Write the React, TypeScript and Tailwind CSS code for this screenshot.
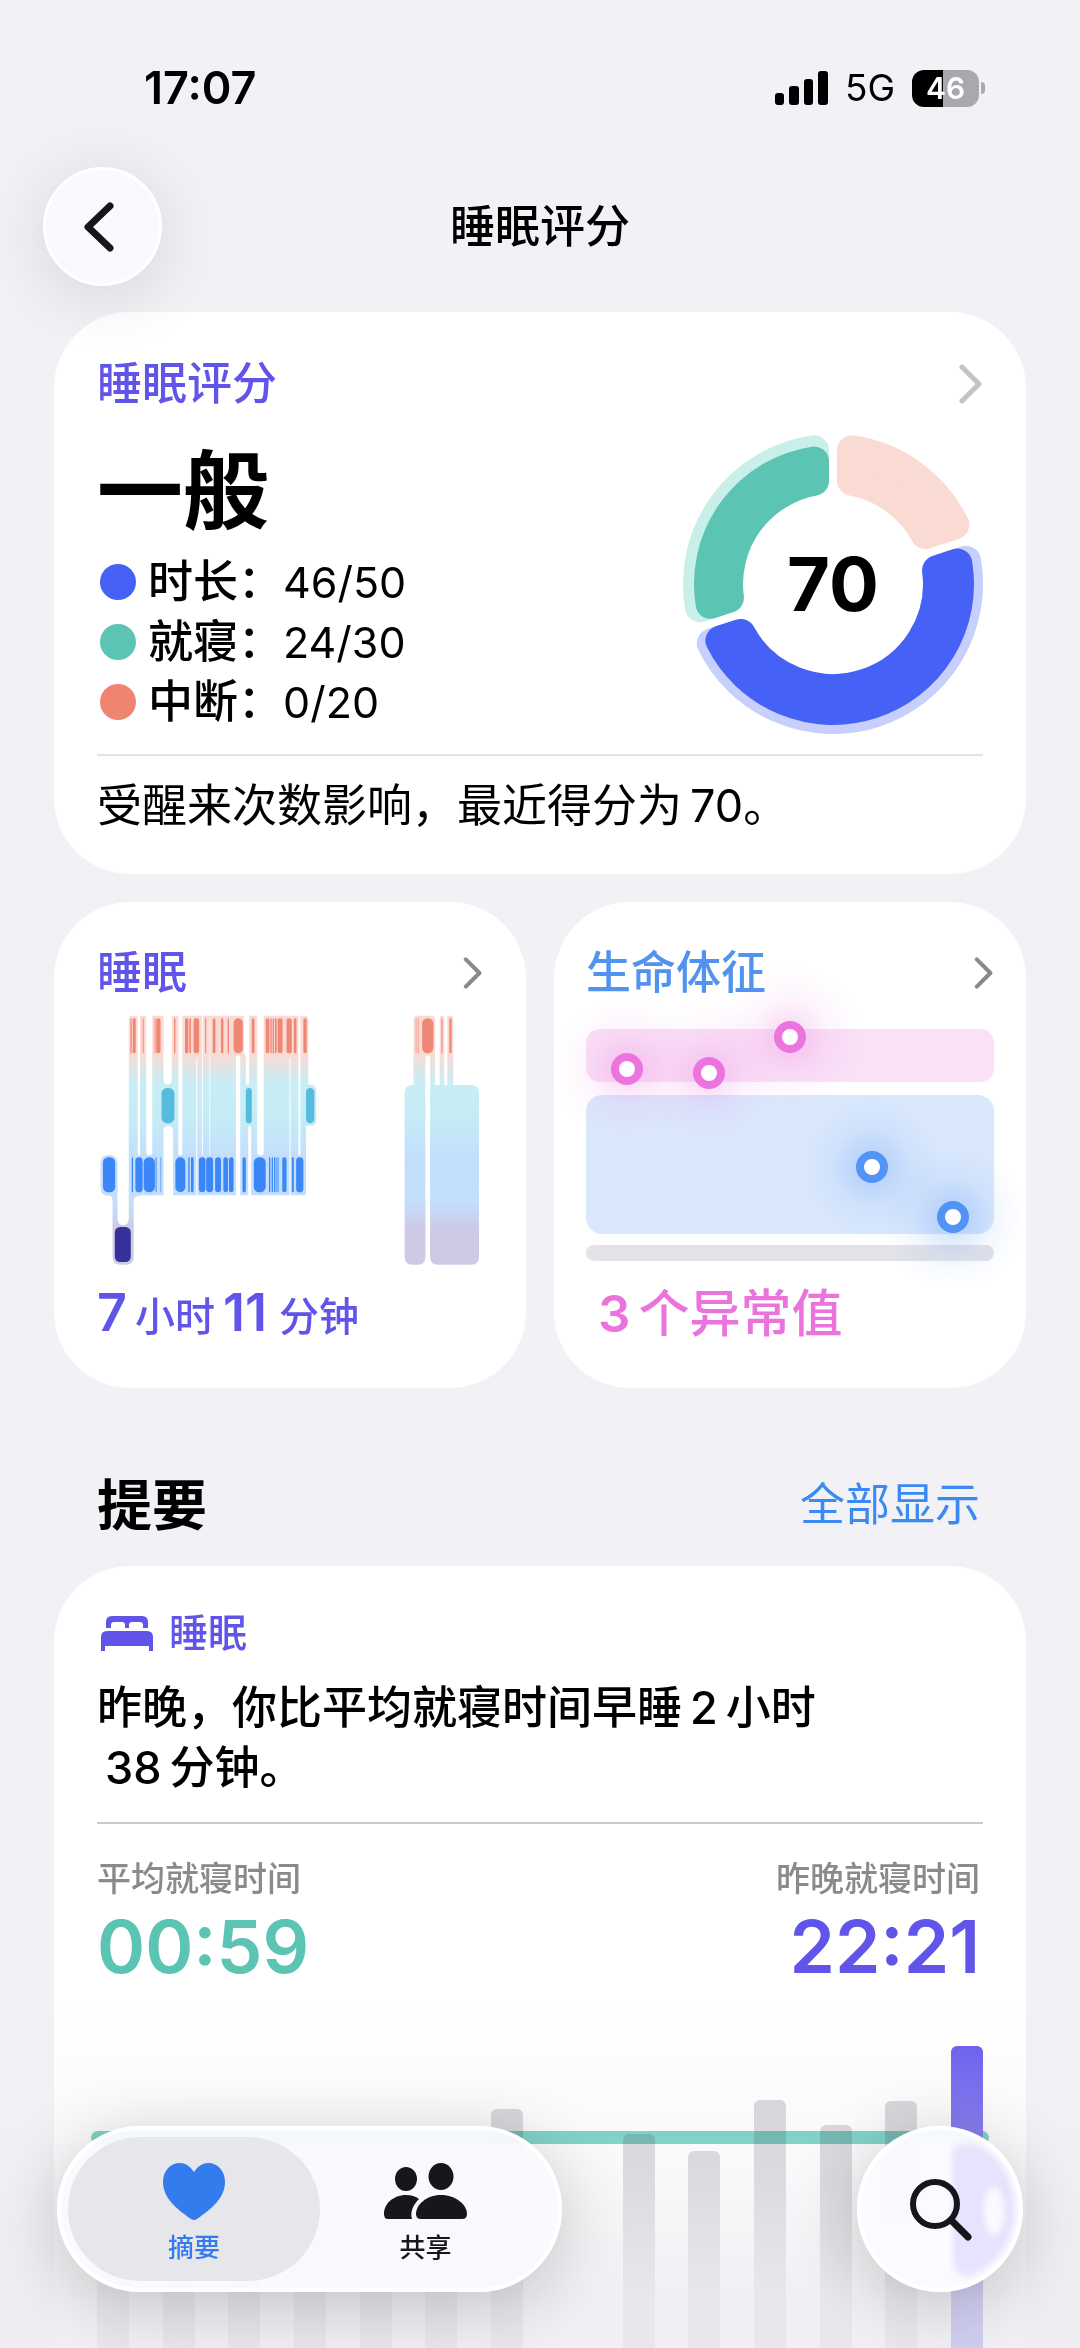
import type { ReactNode } from 'react';
import { clsx } from 'clsx';

const legend = [
  { label: '时长', value: '46/50', dot: 'bg-[#4661f6]' },
  { label: '就寝', value: '24/30', dot: 'bg-[#5bc4b3]' },
  { label: '中断', value: '0/20', dot: 'bg-[#ef8570]' },
];

// [start, end] of every sleep stage on the time axis
const awake = [
  [209, 213], [216, 225], [246, 249], [282, 285], [287, 300], [341, 345], [374, 384], [387, 392],
  [400, 417], [435, 438], [458, 466], [483, 490], [503, 507], [521, 549], [576, 584], [618, 629],
  [632, 636], [639, 643], [646, 651], [654, 669], [681, 697], [703, 711], [732, 742],
];
const rem = [[303, 342], [558, 576], [740, 765]];
const core = [
  [126, 163], [213, 217], [224, 246], [249, 283], [285, 288], [300, 302], [345, 375], [384, 388],
  [392, 400], [416, 436], [438, 459], [465, 483], [490, 504], [507, 521], [548, 558], [582, 618],
  [628, 632], [636, 640], [643, 646], [648, 651], [654, 657], [668, 681], [697, 703], [710, 732],
];
const deep = [[162, 210]];
const nap = [[1091, 1125], [1173, 1180]];
const napFaint = [[1071, 1075], [1078, 1082], [1148, 1154]];

// empty space between stages: [x1, x2, y1, y2]
const stageGaps = [
  [231, 238, 330, 765], [257, 275, 330, 765], [309, 334, 330, 550], [309, 338, 675, 900],
  [354, 366, 330, 765], [408, 411, 470, 900], [425, 428, 330, 765], [448, 450, 355, 765],
  [528, 541, 462, 900], [552, 568, 330, 462], [558, 568, 440, 552], [565, 574, 675, 900],
  [592, 612, 330, 765], [690, 693, 470, 900], [717, 723, 330, 765],
];

const vitals = [
  { x: 41, y: 55, high: true },
  { x: 123, y: 59, high: true },
  { x: 204, y: 23, high: true },
  { x: 286, y: 153, high: false },
  { x: 367, y: 203, high: false },
];

// distance from the top of the chart, null for a day with no data
const bedtimes = [110, 112, 108, 110, 112, 110, 63, null, 88, 105, 54, 79, 55, 0];

// Ring segment whose ends stay parallel to the gap, corners are rounded by the stroke
const segmentPath = (from: number, to: number, outer: number) => {
  const corner = 15;
  const inset = 4 + corner;
  const r1 = 90 + corner;
  const r2 = outer - corner;
  const point = (r: number, deg: number, sign: number) => {
    const a = (deg * Math.PI) / 180 + sign * Math.asin(inset / r);
    return `${150 + r * Math.sin(a)} ${150 - r * Math.cos(a)}`;
  };
  return `M${point(r2, from, 1)} A${r2} ${r2} 0 0 1 ${point(r2, to, -1)} L${point(r1, to, -1)} A${r1} ${r1} 0 0 0 ${point(r1, from, 1)} Z`;
};

const Segment = ({ from, to, outer, color }: { from: number; to: number; outer: number; color: string }) => (
  <path d={segmentPath(from, to, outer)} fill={color} stroke={color} strokeWidth={30} strokeLinejoin="round" />
);

const ScoreRing = () => (
  <div className="relative flex size-[300px] items-center justify-center">
    <svg viewBox="0 0 300 300" className="absolute inset-0 size-full">
      <Segment from={0} to={72} outer={150} color="#f9dbd3" />
      <Segment from={72} to={252} outer={150} color="#c7cffc" />
      <Segment from={72} to={252} outer={141} color="#4661f6" />
      <Segment from={252} to={360} outer={150} color="#c8f0e9" />
      <Segment from={252} to={360} outer={139} color="#5bc4b3" />
    </svg>
    <span className="relative text-[74px] leading-none font-bold">70</span>
  </div>
);

const Chevron = ({ className }: { className: string }) => (
  <svg viewBox="0 0 24 40" fill="none" className={className}>
    <path d="M3 3 20 20 3 37" stroke="currentColor" strokeWidth={5} strokeLinecap="round" strokeLinejoin="round" />
  </svg>
);

const Num = ({ children }: { children: ReactNode }) => <span className="mx-2">{children}</span>;

const Card = ({ className, children }: { className?: string; children: ReactNode }) => (
  <section className={clsx('rounded-[76px] bg-white', className)}>{children}</section>
);

const Stages = ({ data, y, color }: { data: number[][]; y: number; color: string }) => (
  <g fill={color}>
    {data.map(([a, b]) => (
      <rect key={a} x={a} y={y} width={b - a} height={106} rx={Math.min(16, (b - a) / 2)} />
    ))}
  </g>
);

const SleepChart = () => (
  <svg viewBox="108 340 1167 759" className="mt-3 w-full">
    <defs>
      <linearGradient id="stages" gradientUnits="userSpaceOnUse" x1="0" y1="340" x2="0" y2="1100">
        <stop offset="0.15" stopColor="#fbdad3" />
        <stop offset="0.27" stopColor="#c8edf5" />
        <stop offset="0.42" stopColor="#c5ecf6" />
        <stop offset="0.56" stopColor="#c2defd" />
        <stop offset="0.74" stopColor="#c4dffd" />
        <stop offset="0.85" stopColor="#cccae5" />
      </linearGradient>
    </defs>
    <g fill="url(#stages)">
      <rect x={204} y={342} width={543} height={543} rx={12} />
      <rect x={119} y={764} width={51} height={122} rx={20} />
      <path d="M140 884 Q155 884 155 905 V1070 Q155 1095 180 1095 H194 Q219 1095 219 1070 V905 Q219 885 240 885 V860 H204 V956 Q204 975 187 975 Q170 975 170 956 V860 H140 Z" />
    </g>
    <g fill="#fff">
      {stageGaps.map(([x1, x2, y1, y2]) => (
        <rect key={`${x1}-${y1}`} x={x1} y={y1} width={x2 - x1} height={y2 - y1} rx={(x2 - x1) / 2} />
      ))}
      <rect x={740} y={660} width={10} height={230} />
    </g>
    <g fill="url(#stages)">
      <rect x={297} y={551} width={51} height={124} rx={18} />
      <rect x={552} y={551} width={30} height={124} rx={12} />
      <rect x={732} y={551} width={39} height={124} rx={16} />
      <path d="M1065 560 V354 Q1065 342 1077 342 H1118 Q1130 342 1130 354 V560 Z" />
      <rect x={1144} y={342} width={14} height={240} rx={6} />
      <rect x={1167} y={342} width={18} height={240} rx={6} />
      <path d="M1038 576 Q1038 552 1062 552 H1239 Q1263 552 1263 576 V1071 Q1263 1095 1239 1095 H1139 Q1115 1095 1115 1071 V576 H1101 V1071 Q1101 1095 1077 1095 H1062 Q1038 1095 1038 1071 Z" />
    </g>
    <rect x={1101} y={462} width={14} height={130} rx={7} fill="#fff" />
    <Stages data={awake} y={350} color="#ef8775" />
    <Stages data={rem} y={561} color="#55bce0" />
    <Stages data={core} y={770} color="#3b87f8" />
    <Stages data={deep} y={981} color="#35309a" />
    <Stages data={nap} y={350} color="#ef8775" />
    <Stages data={napFaint} y={350} color="#f4aea2" />
  </svg>
);

const VitalsChart = () => (
  <svg viewBox="0 0 408 253" className="mt-[11px] w-full overflow-visible">
    <defs>
      <radialGradient id="glow-high">
        <stop offset="0.2" stopColor="#ed74df" stopOpacity={0.22} />
        <stop offset="0.55" stopColor="#ed74df" stopOpacity={0.07} />
        <stop offset="1" stopColor="#ed74df" stopOpacity={0} />
      </radialGradient>
      <radialGradient id="glow-normal">
        <stop offset="0.2" stopColor="#5293f5" stopOpacity={0.24} />
        <stop offset="0.55" stopColor="#5293f5" stopOpacity={0.08} />
        <stop offset="1" stopColor="#5293f5" stopOpacity={0} />
      </radialGradient>
    </defs>
    <rect y={15} width={408} height={53} rx={14} fill="#f9e1f7" />
    <rect y={81} width={408} height={139} rx={16} fill="#dae8fc" />
    <rect y={231} width={408} height={16} rx={8} fill="#e3e3e8" />
    {vitals.map(({ x, y, high }) => (
      <circle key={x} cx={x} cy={y} r={72} fill={high ? 'url(#glow-high)' : 'url(#glow-normal)'} />
    ))}
    {vitals.map(({ x, y, high }) => (
      <circle key={x} cx={x} cy={y} r={12} fill="#fff" stroke={high ? '#ed74df' : '#5293f5'} strokeWidth={8} />
    ))}
  </svg>
);

const BedtimeChart = () => (
  <div className="relative mt-[59px] flex flex-1 justify-between">
    <div className="absolute -inset-x-1.5 top-[85px] h-[13px] rounded-full bg-[#57c8b6]" />
    {bedtimes.map((top, i) => (
      <div
        key={i}
        className={clsx(
          'relative w-8 rounded-t-md',
          top === null ? 'invisible' : i === bedtimes.length - 1 ? 'bg-[#6055ec]' : 'bg-[#d0d0d5] mix-blend-multiply'
        )}
        style={{ marginTop: top ?? 0 }}
      />
    ))}
  </div>
);

const StatusBar = () => (
  <div className="flex items-center justify-between pt-[60px] pr-[95px] pl-36 leading-[56px]">
    <span className="text-[45px] font-semibold">17:07</span>
    <div className="flex items-center gap-[17px]">
      <svg viewBox="0 0 53 34" className="h-[34px] w-[53px]">
        <rect x={0} y={22} width={9} height={12} rx={3} />
        <rect x={14} y={15} width={10} height={19} rx={3} />
        <rect x={29} y={8} width={9} height={26} rx={3} />
        <rect x={43} y={0} width={10} height={34} rx={3} />
      </svg>
      <span className="text-[37px]">5G</span>
      <div className="flex items-center gap-0.5">
        <div className="flex h-[37px] w-[67px] items-center justify-center rounded-xl bg-linear-to-r from-black from-46% to-[#a9a9ad] to-46% text-[30px] font-semibold text-white">
          46
        </div>
        <div className="h-3 w-1 rounded-r-full bg-[#a9a9ad]" />
      </div>
    </div>
  </div>
);

const TabBar = () => (
  <div className="absolute inset-x-0 bottom-14 flex justify-between px-[57px]">
    <nav className="flex rounded-full border-4 border-white bg-[#fafafe]/95 p-[7px] shadow-[0_12px_70px_rgba(0,0,0,0.2)]">
      <a
        href="#summary"
        className="flex h-[144px] w-[252px] flex-col items-center rounded-full bg-[#e4e4e9]/90 pt-[26px] text-[26px] font-medium text-[#347bee]"
      >
        <svg viewBox="0 0 62 57" className="h-[57px] w-[62px]" fill="currentColor">
          <path d="M31 9C27 3 22 0 17 0 7 0 0 8 0 19c0 15 12 26 28 37q3 2 6 0C50 45 62 34 62 19 62 8 55 0 45 0 40 0 35 3 31 9Z" />
        </svg>
        <span className="mt-2 leading-10">摘要</span>
      </a>
      <a
        href="#sharing"
        className="flex h-[144px] w-[231px] flex-col items-center pt-[26px] pr-5 text-[26px] font-medium text-[#17171a]"
      >
        <svg viewBox="0 0 84 57" className="h-[57px] w-[84px]" fill="currentColor">
          <ellipse cx={22} cy={16} rx={11} ry={12} />
          <ellipse cx={57} cy={13.5} rx={12.5} ry={13.5} />
          <path d="M28 56H4q-4 0-4-5C0 41 9 32 22 32q8 0 13 4C29 42 26 49 28 56Z" />
          <path d="M37 56q-5 0-5-5C32 42 42 32 57 32s26 10 26 19q0 5-5 5Z" />
        </svg>
        <span className="mt-2 leading-10">共享</span>
      </a>
    </nav>
    <button
      type="button"
      aria-label="搜索"
      className="size-[166px] overflow-hidden rounded-full border-4 border-white bg-[#fbfbff]/97 shadow-[0_12px_70px_rgba(0,0,0,0.2)]"
    >
      <svg viewBox="0 0 158 158" className="size-full" fill="none">
        <defs>
          <filter id="soft" x="-30%" y="-30%" width="160%" height="160%">
            <feGaussianBlur stdDeviation="3" />
          </filter>
        </defs>
        <path d="M92 28Q90 14 106 14C134 16 154 46 154 80S132 138 108 146Q94 146 92 132Z" fill="#e7e2fd" filter="url(#soft)" />
        <ellipse cx={133} cy={81} rx={10} ry={24} fill="#fbfaff" filter="url(#soft)" />
        <circle cx={74} cy={74} r={22} stroke="#16151c" strokeWidth={6} />
        <path d="m91 91 16 16" stroke="#16151c" strokeWidth={7} strokeLinecap="round" />
      </svg>
    </button>
  </div>
);

const App = () => {
  return (
    <div className="relative flex h-screen flex-col overflow-hidden bg-[#f1f1f6] font-['Inter','Noto_Sans_CJK_SC',sans-serif] text-black">
      <StatusBar />

      <header className="mt-[51px] grid grid-cols-[1fr_auto_1fr] items-center px-[43px]">
        <button
          type="button"
          aria-label="返回"
          className="relative z-10 flex size-[119px] items-center justify-center rounded-full border-3 border-white bg-[#fafafe] pr-2 shadow-[0_10px_70px_rgba(0,0,0,0.12)]"
        >
          <svg viewBox="0 0 30 50" fill="none" className="h-[50px] w-[30px]">
            <path d="M26 4 4 25 26 46" stroke="#17171a" strokeWidth={7} strokeLinecap="round" strokeLinejoin="round" />
          </svg>
        </button>
        <h1 className="text-[45px] font-medium">睡眠评分</h1>
      </header>

      <main className="mt-[26px] flex flex-1 flex-col px-[54px]">
        <Card className="px-[43px] pt-[42px] pb-[38px]">
          <div className="flex items-center justify-between text-[45px] leading-[60px]">
            <h2 className="font-medium text-[#6055e8]">睡眠评分</h2>
            <Chevron className="h-10 w-6 text-[#c4c4c7]" />
          </div>
          <div className="mt-5 flex justify-between">
            <div className="pt-2">
              <p className="text-[86px] leading-[100px] font-bold">一般</p>
              <ul className="mt-2.5">
                {legend.map((item) => (
                  <li key={item.label} className="flex items-center text-[45px] leading-[60px]">
                    <span className={clsx('mr-3 ml-[3px] size-9 rounded-full', item.dot)} />
                    <span className="font-medium">{item.label}：</span>
                    <span className="text-[43px]">{item.value}</span>
                  </li>
                ))}
              </ul>
            </div>
            <ScoreRing />
          </div>
          <p className="mt-5 border-t-2 border-[#e3e3e5] pt-5 text-[45px] leading-[60px]">
            受醒来次数影响，最近得分为<span className="ml-2">70</span>。
          </p>
        </Card>

        <div className="mt-7 grid grid-cols-2 gap-7">
          <Card className="px-[43px] pt-[41px] pb-[38px]">
            <div className="flex items-center justify-between text-[45px] leading-[60px]">
              <h2 className="font-medium text-[#6055e8]">睡眠</h2>
              <Chevron className="h-8 w-5 text-[#89898b]" />
            </div>
            <SleepChart />
            <p className="mt-[11px] flex h-[72px] items-baseline text-[40px] leading-[72px] font-medium text-[#6055e8]">
              <span className="mr-2 text-[52px] font-semibold">7</span>小时
              <span className="mr-3 ml-2 text-[52px] font-semibold">11</span>分钟
            </p>
          </Card>
          <Card className="px-8 pt-[41px] pb-[38px]">
            <div className="flex items-center justify-between text-[45px] leading-[60px]">
              <h2 className="font-medium text-[#5293f0]">生命体征</h2>
              <Chevron className="h-8 w-5 text-[#89898b]" />
            </div>
            <VitalsChart />
            <p className="mt-[11px] h-[72px] text-[51px] leading-[72px] font-medium text-[#ea74dc]">
              <span className="mr-2 ml-3 font-semibold">3</span>个异常值
            </p>
          </Card>
        </div>

        <div className="mt-[77px] flex items-center justify-between pr-[46px] pl-[43px] leading-[80px]">
          <h2 className="text-[55px] font-bold">提要</h2>
          <a href="#all" className="text-[45px] text-[#3b8af2]">
            全部显示
          </a>
        </div>

        <section className="mt-[21px] flex flex-1 flex-col rounded-t-[76px] bg-white px-[43px] pt-[42px]">
          <div className="flex items-center gap-4 pl-1 text-[#6055e8]">
            <svg viewBox="0 0 52 35" className="h-[35px] w-[52px]" fill="currentColor">
              <path d="M5 12V6q0-6 6-6H41q6 0 6 6v6H42V9q0-3-3-3H31q-3 0-3 3v3H24V9q0-3-3-3H13Q10 6 10 9v3Z" />
              <path d="M0 35V21q0-6 6-6H46q6 0 6 6V35H48V30H4v5Z" />
            </svg>
            <h3 className="text-[39px] leading-[50px] font-medium">睡眠</h3>
          </div>
          <p className="mt-5 border-b-2 border-[#c9c9cb] pb-6 text-[45px] leading-[60px] font-medium">
            昨晚，你比平均就寝时间早睡<Num>2</Num>小时
            <br />
            <Num>38</Num>分钟。
          </p>
          <dl className="mt-[33px] flex justify-between pr-[3px]">
            <div>
              <dt className="text-[34px] leading-[44px] font-medium text-[#8a8a8d]">平均就寝时间</dt>
              <dd className="mt-1.5 text-[73px] leading-[80px] font-semibold text-[#5bc4b3]">00:59</dd>
            </div>
            <div className="text-right">
              <dt className="text-[34px] leading-[44px] font-medium text-[#8a8a8d]">昨晚就寝时间</dt>
              <dd className="mt-1.5 text-[73px] leading-[80px] font-semibold text-[#6055e8]">22:21</dd>
            </div>
          </dl>
          <BedtimeChart />
        </section>
      </main>

      <div className="pointer-events-none absolute inset-x-0 bottom-0 h-[350px] bg-linear-to-b from-transparent via-[#ededf2]/35 via-50% to-[#ededf2]/80 to-85%" />
      <TabBar />
    </div>
  );
};

export default App;
